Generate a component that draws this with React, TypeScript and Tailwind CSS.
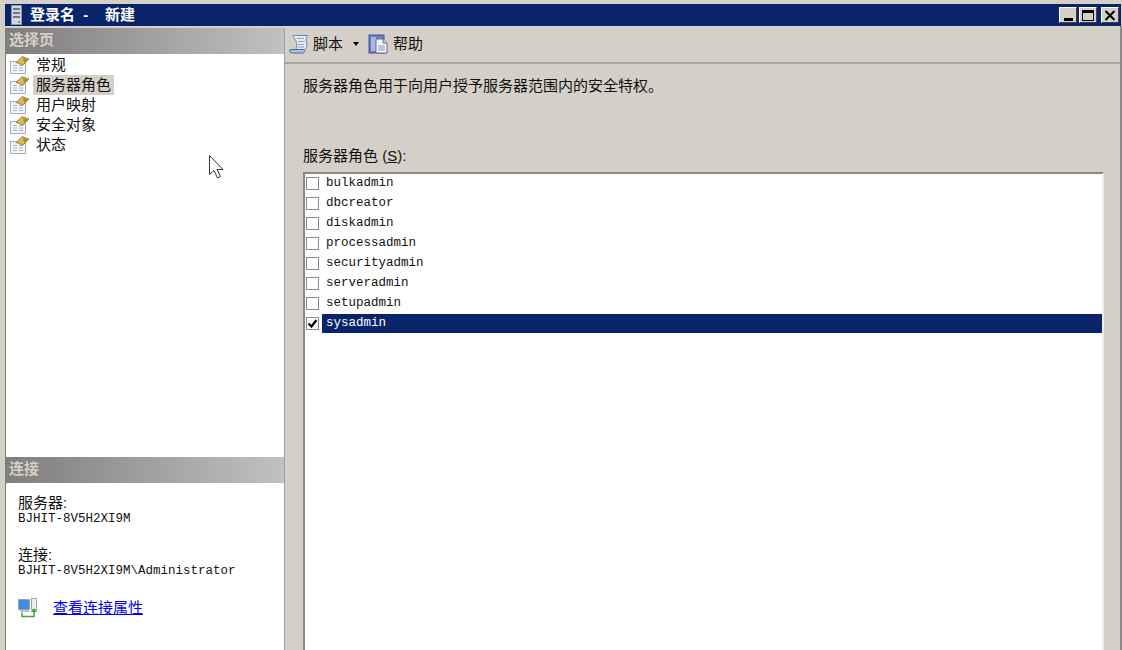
const cjk = "font-['Liberation_Sans','Noto_Sans_CJK_SC',sans-serif]";
const mono = "font-['Liberation_Mono','Noto_Sans_CJK_SC',monospace] text-[12.5px]";

const pages = ["常规", "服务器角色", "用户映射", "安全对象", "状态"];
const roles = ["bulkadmin", "dbcreator", "diskadmin", "processadmin", "securityadmin", "serveradmin", "setupadmin", "sysadmin"];

function PageIcon() {
  return (
    <svg width="20" height="19" viewBox="0 0 20 19" className="shrink-0 mb-[2px]">
      <rect x="0.5" y="6.5" width="15" height="12" fill="#f6f7fa" stroke="#a9adb5" />
      <path d="M3 10.5h4M9 10.5h4M3 13h4M9 13h4M3 15.5h4M9 15.5h4" stroke="#9fb1cf" />
      <path d="M6 7.5l6-6 7 2.5-6 6z" fill="#e2b54d" stroke="#8a7638" strokeWidth="0.8" />
      <path d="M13 3l5 1.5-4 3.5z" fill="#7d9a45" />
    </svg>
  );
}

function ScriptIcon() {
  return (
    <svg width="21" height="20" viewBox="0 0 21 20">
      <path d="M4 1.5h15c-2 1-2 3-1.5 5.5s.5 6-1 8.5H7c1-3 1-6 0-8.5S4 3 4 1.5z" fill="#e6ecf7" stroke="#6d88b8" />
      <path d="M1 15.5h14c1 1 1 3-1 3.5H3c-2 0-3-2-2-3.5z" fill="#a9c0e4" stroke="#4d6ba3" />
      <path d="M8 4.5h7M9 7.5h7M9 10.5h6M9 13h6" stroke="#8ea3c8" />
    </svg>
  );
}

function HelpIcon() {
  return (
    <svg width="21" height="20" viewBox="0 0 21 20">
      <rect x="1" y="1" width="15" height="18" fill="#6c7fc4" stroke="#3f4f96" />
      <rect x="3" y="3" width="5" height="14" fill="#aab6e2" />
      <path d="M8 5h7l4 4v10H8z" fill="#f7f8fb" stroke="#5c6a8c" />
      <path d="M15 5v4h4" fill="#d5dbe8" stroke="#5c6a8c" />
      <path d="M10 12h7M10 14h7M10 16h7" stroke="#8391b3" />
    </svg>
  );
}

function ConnIcon() {
  return (
    <svg width="20" height="20" viewBox="0 0 20 20" className="shrink-0">
      <rect x="0.5" y="1.5" width="11" height="10" fill="#3d8fe6" stroke="#9aa3b0" />
      <rect x="13.5" y="0.5" width="5" height="11" fill="#eceef1" stroke="#9aa3b0" />
      <rect x="2" y="12" width="9" height="2" fill="#bcc2cc" />
      <path d="M4 14.5v4h12v-5" fill="none" stroke="#45a63a" strokeWidth="1.6" />
      <path d="M12.5 14l3.5-3.5 3.5 3.5z" fill="#45a63a" />
    </svg>
  );
}

function Cursor() {
  return (
    <svg width="17" height="26" viewBox="0 0 17 26" className="absolute left-[208px] top-[154px]">
      <path d="M1.5 1.5v19l4.5-4 3.5 7.5 3-1.5-3.5-7h6z" fill="#fff" stroke="#333" strokeWidth="1" />
    </svg>
  );
}

function WinButton({ children }: { children: React.ReactNode }) {
  return (
    <div className="w-[18px] h-[16px] bg-[#d4d0c8] border border-t-white border-l-white border-r-[#404040] border-b-[#404040] flex items-center justify-center">
      {children}
    </div>
  );
}

function PaneHeader({ label }: { label: string }) {
  return (
    <div className="h-[26px] bg-gradient-to-r from-[#7f7d7d] to-[#c2c0c0] pl-[3px] pb-[2px] flex items-center text-[15px] font-bold text-[#d4d0c8] shrink-0">
      {label}
    </div>
  );
}

export default function App() {
  return (
    <div className={`${cjk} w-[1122px] h-[650px] overflow-hidden bg-[#d4d0c8] pt-[4px] pl-[5px] flex flex-col text-[15px] text-[#111]`}>
      {/* title bar */}
      <div className="h-[22px] mr-[1px] bg-[#0a246a] flex items-center shrink-0 pl-[6px] pr-[2px]">
        <svg width="11" height="20" viewBox="0 0 11 20" className="shrink-0">
          <rect x="0.5" y="0.5" width="10" height="19" fill="#cfd6e4" stroke="#8b94a8" />
          <path d="M2 4h7M2 8h7M2 12h7" stroke="#556" strokeWidth="1.4" />
          <rect x="7" y="16" width="2" height="2" fill="#49b649" />
        </svg>
        <span className="ml-[8px] text-white font-bold whitespace-pre">登录名  -    新建</span>
        <div className="ml-auto flex items-center gap-[2px]">
          <WinButton>
            <div className="w-[9px] h-[3px] bg-black mt-[8px]" />
          </WinButton>
          <WinButton>
            <div className="w-[12px] h-[11px] border border-t-[3px] border-black" />
          </WinButton>
          <div className="ml-[2px]">
            <WinButton>
              <svg width="12" height="11" viewBox="0 0 12 11">
                <path d="M1.5 1l9 9M10.5 1l-9 9" stroke="#000" strokeWidth="2" />
              </svg>
            </WinButton>
          </div>
        </div>
      </div>

      <div className="flex flex-1 min-h-0 pt-[2px] border-r-2 border-[#8a8a8a]">
        {/* left pane */}
        <div className="relative w-[280px] shrink-0 flex flex-col bg-white border-r border-[#a0a0a0] border-l border-l-[#808080]">
          <PaneHeader label="选择页" />
          <div className="flex-1 pt-[1px] pl-[4px]">
            {pages.map((p, i) => (
              <div key={p} className="h-[20px] flex items-center">
                <PageIcon />
                <span className={`ml-[3px] h-[20px] leading-[20px] px-[3px] ${i === 1 ? "bg-[#d4d0c8]" : ""}`}>{p}</span>
              </div>
            ))}
          </div>
          <PaneHeader label="连接" />
          <div className="h-[167px] pl-[12px] pt-[12px] shrink-0 leading-[16px]">
            <div>服务器:</div>
            <div className={`${mono} leading-[16px]`}>BJHIT-8V5H2XI9M</div>
            <div className="mt-[20px]">连接:</div>
            <div className={`${mono} leading-[16px]`}>BJHIT-8V5H2XI9M\Administrator</div>
            <div className="flex items-center mt-[19px]">
              <ConnIcon />
              <a className="ml-[15px] text-[#0000ee] underline">查看连接属性</a>
            </div>
          </div>
        </div>

        {/* right pane */}
        <div className="flex-1 flex flex-col min-w-0">
          <div className="h-[36px] border-b-2 border-[#a8a6a0] flex items-center pl-[4px] pb-[2px] shrink-0">
            <ScriptIcon />
            <span className="ml-[3px]">脚本</span>
            <div className="ml-[10px] w-0 h-0 border-x-[3.5px] border-x-transparent border-t-[4px] border-t-black" />
            <div className="ml-[9px]">
              <HelpIcon />
            </div>
            <span className="ml-[4px]">帮助</span>
          </div>
          <div className="flex-1 pl-[18px] pr-[16px] pt-[12px] flex flex-col min-h-0">
            <div className="h-[20px] leading-[20px] whitespace-nowrap">服务器角色用于向用户授予服务器范围内的安全特权。</div>
            <div className="mt-[50px] h-[20px] leading-[20px]">
              服务器角色 (<span className="underline">S</span>):
            </div>
            <div className="mt-[6px] flex-1 bg-white border-2 border-b-0 border-t-[#8a8880] border-l-[#8a8880] border-r-[#f2f0ea] pl-[1px]">
              {roles.map((r) => {
                const checked = r === "sysadmin";
                return (
                  <div key={r} className="h-[20px] flex items-start">
                    <div className="w-[13px] h-[13px] mt-[3px] border border-[#8a8a8a] bg-white shrink-0 flex items-center justify-center">
                      {checked && (
                        <svg width="11" height="11" viewBox="0 0 11 11">
                          <path d="M1.5 5.5l3 3 5-6.5" fill="none" stroke="#000" strokeWidth="2.2" />
                        </svg>
                      )}
                    </div>
                    <div className={`${mono} ml-[3px] flex-1 h-[19px] leading-[19px] pl-[4px] ${checked ? "bg-[#0a246a] text-white" : ""}`}>
                      {r}
                    </div>
                  </div>
                );
              })}
            </div>
          </div>
        </div>
      </div>
      <Cursor />
    </div>
  );
}
